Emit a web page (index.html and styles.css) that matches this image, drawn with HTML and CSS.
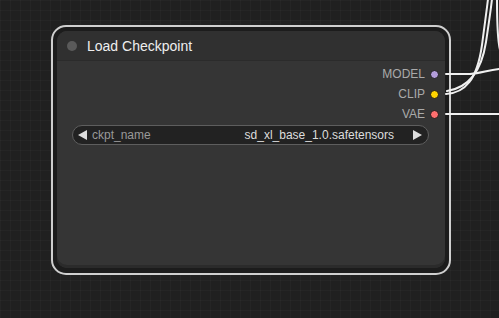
FILE: index.html
```html
<!DOCTYPE html>
<html lang="en">
<head>
  <meta charset="UTF-8" />
  <meta name="viewport" content="width=device-width, initial-scale=1.0">
  <title>Load Checkpoint</title>
  <link rel="stylesheet" href="styles.css">
</head>
<body>

  <div class="canvas">
    <div class="node-outline">
      <div class="node">
        <div class="node-title">
          <span class="title-dot"></span>
          <span class="title-text">Load Checkpoint</span>
        </div>

        <div class="node-body">
          <div class="slot">
            <span class="slot-name">MODEL</span>
            <span class="slot-dot model"></span>
          </div>
          <div class="slot">
            <span class="slot-name">CLIP</span>
            <span class="slot-dot clip"></span>
          </div>
          <div class="slot">
            <span class="slot-name">VAE</span>
            <span class="slot-dot vae"></span>
          </div>

          <div class="combo">
            <svg class="arrow" width="9" height="10" viewBox="0 0 9 10"><path d="M0 5 L9 0 L9 10 Z" fill="#ddd"/></svg>
            <span class="combo-name">ckpt_name</span>
            <span class="combo-value">sd_xl_base_1.0.safetensors</span>
            <svg class="arrow" width="9" height="10" viewBox="0 0 9 10"><path d="M9 5 L0 0 L0 10 Z" fill="#ddd"/></svg>
          </div>
        </div>
      </div>
    </div>

    <!-- links leaving the output slots -->
    <svg class="wires" width="499" height="318" viewBox="0 0 499 318">
      <g fill="none" stroke="#f0f0f0" stroke-width="2" stroke-linecap="round">
        <path d="M446 74 L470 74 C482 73 488 70 500 69" />
        <path d="M446 114 L500 114" />
        <path d="M446 94 C465 93 477 80 482 45 C485 22 487 8 488 -1" />
        <path d="M447 91 C467 88 481 74 486 42 C489 22 491 8 492 -1" />
        <path d="M500 50 C497 38 497 18 497 -1" />
      </g>
    </svg>
  </div>

</body>
</html>
```

FILE: styles.css
```css
html, body {
  margin: 0;
  padding: 0;
}

body {
  width: 499px;
  height: 318px;
  overflow: hidden;
  font-family: "Liberation Sans", Arial, sans-serif;
  background-color: #202020;
  background-image:
    linear-gradient(rgba(255,255,255,0.025) 1px, transparent 1px),
    linear-gradient(90deg, rgba(255,255,255,0.025) 1px, transparent 1px);
  background-size: 10px 10px;
}

.canvas {
  position: relative;
  width: 499px;
  height: 318px;
  padding-top: 25px;
  box-sizing: border-box;
}

.node-outline {
  margin-left: 51px;
  width: 400px;
  box-sizing: border-box;
  border: 2px solid #cfcfcf;
  border-radius: 15px;
  padding: 4px 4px 5px 4px;
  background: #1c1c1c;
}

.node {
  height: 237px;
  background: #353535;
  border-radius: 10px;
  overflow: hidden;
  box-shadow: inset 0 -3px 0 #2b2b2b;
}

.node-title {
  height: 29px;
  display: flex;
  align-items: center;
  gap: 10px;
  padding-left: 10px;
  background: #303030;
  border-bottom: 1px solid #2b2b2b;
}

.title-dot {
  width: 10px;
  height: 10px;
  border-radius: 50%;
  background: #5a5a5a;
}

.title-text {
  font-size: 14px;
  color: #eee;
}

.node-body {
  padding-top: 3px;
}

.slot {
  height: 20px;
  display: flex;
  justify-content: flex-end;
  align-items: center;
  gap: 5px;
  padding-right: 6px;
}

.slot-name {
  font-size: 12px;
  color: #aaa;
}

.slot-dot {
  width: 9px;
  height: 9px;
  box-sizing: border-box;
  border-radius: 50%;
  border: 1px solid #1a1a1a;
}

.slot-dot.model { background: #b39ddb; }
.slot-dot.clip  { background: #ffd500; }
.slot-dot.vae   { background: #ff6e6e; }

.combo {
  margin: 1px 16px 0 15px;
  height: 20px;
  box-sizing: border-box;
  border: 1px solid #5e5e5e;
  border-radius: 10px;
  background: #222;
  display: flex;
  align-items: center;
  padding: 0 6px 0 5px;
  font-size: 12px;
}

.combo-name {
  margin-left: 5px;
  color: #999;
}

.combo-value {
  flex: 1;
  text-align: right;
  color: #ddd;
  margin-right: 19px;
}

.wires {
  position: absolute;
  left: 0;
  top: 0;
  pointer-events: none;
}
```
